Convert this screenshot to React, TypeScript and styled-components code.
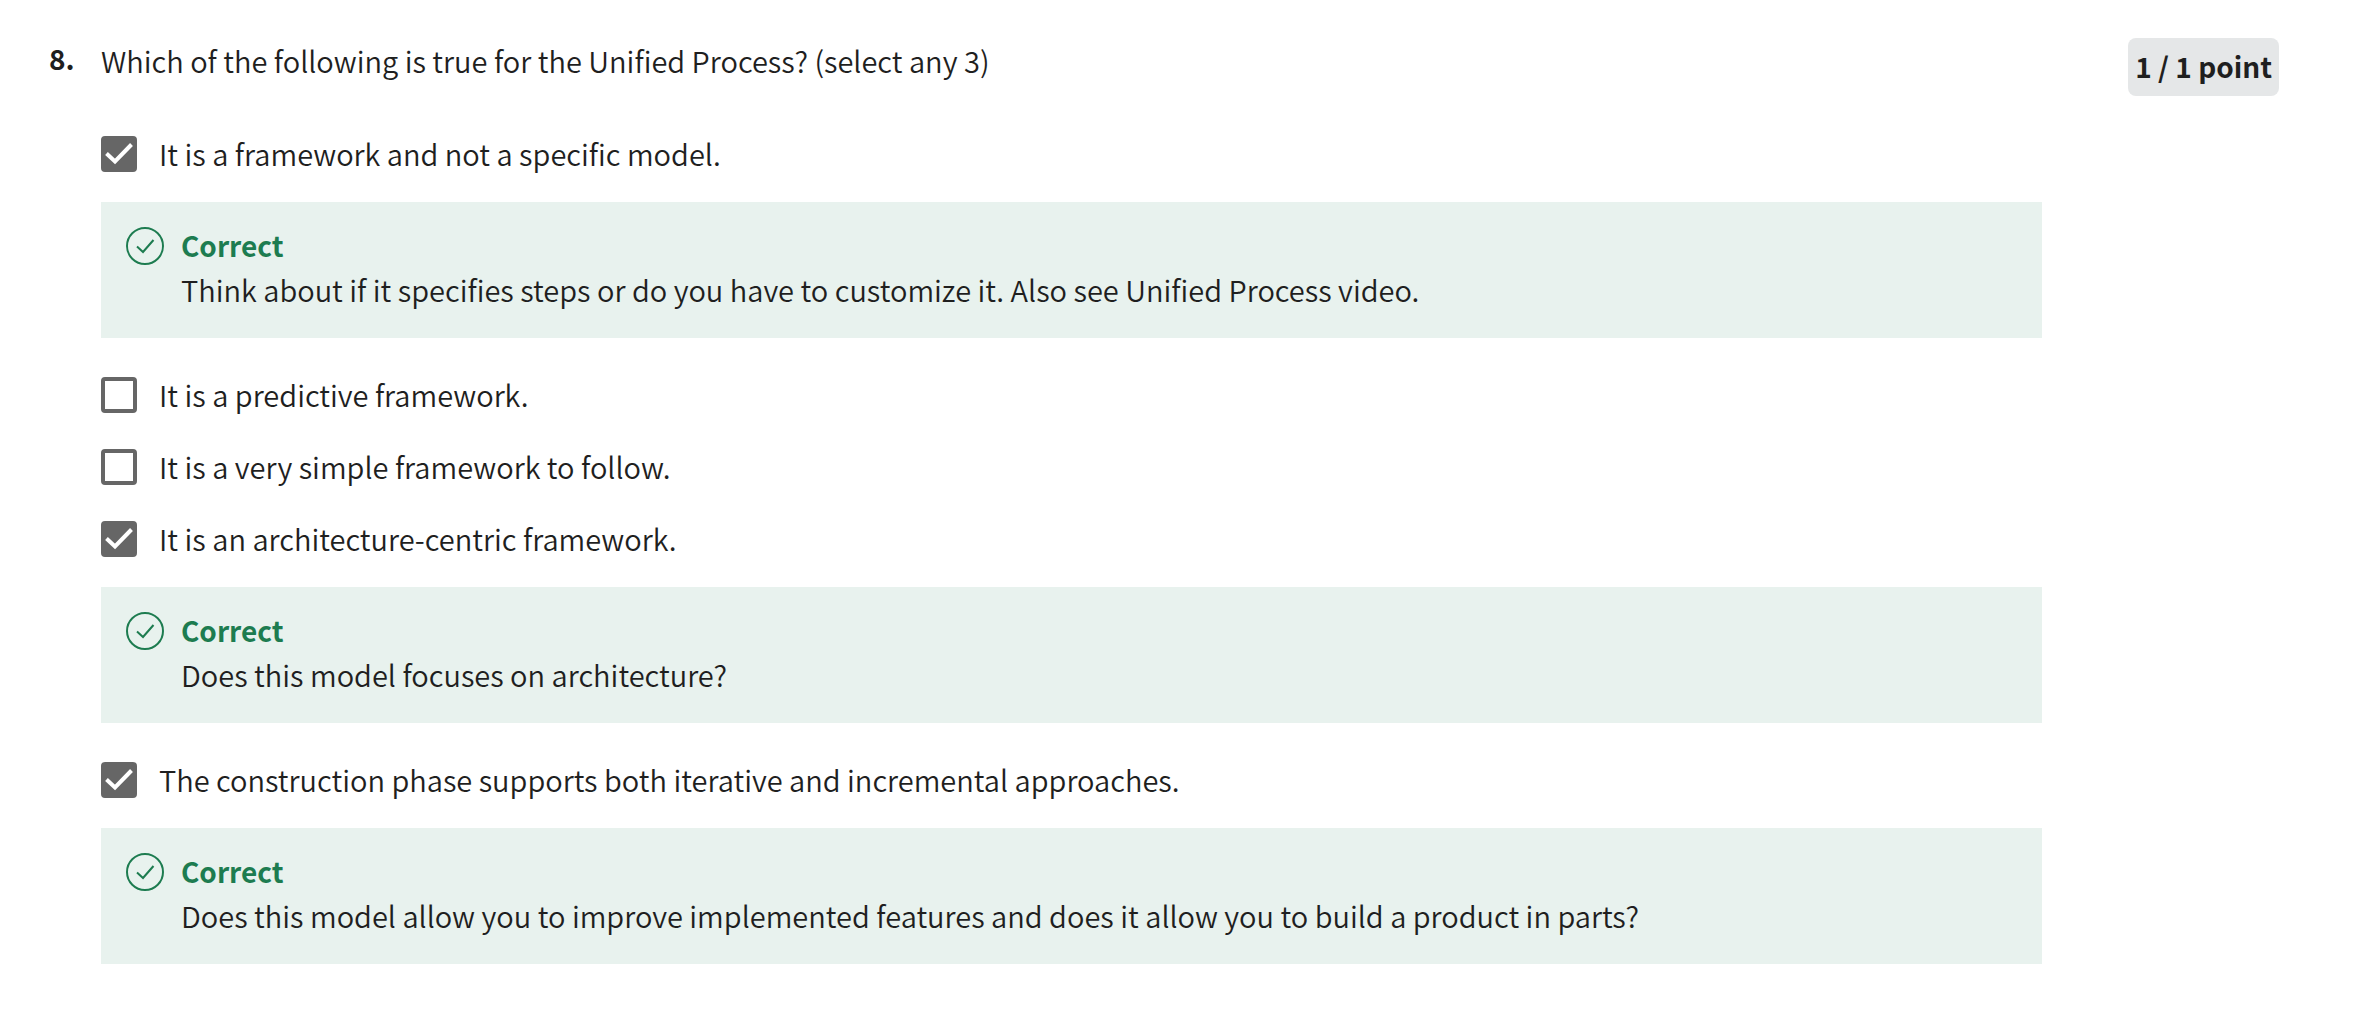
import React from "react";
import styled, { createGlobalStyle } from "styled-components";

const GlobalStyle = createGlobalStyle`
  *, *::before, *::after { box-sizing: border-box; }
  body {
    margin: 0;
    background: #fff;
    color: #1f1f1f;
    font-family: "Source Sans Pro", "Noto Sans CJK SC", "Noto Sans", sans-serif;
    font-size: 29px;
    font-weight: 350;
    line-height: 44px;
  }
`;

const Page = styled.main`
  display: flex;
  align-items: flex-start;
  padding: 38px 100px 46px 49px;
`;

const QuestionNumber = styled.span`
  flex: 0 0 52px;
  font-size: 28px;
  line-height: 40px;
  font-weight: 700;
`;

const Question = styled.fieldset`
  flex: 1;
  min-width: 0;
  margin: 0 86px 0 0;
  padding: 0;
  border: 0;
`;

const Prompt = styled.legend`
  display: block;
  padding: 0 0 36px;
`;

const Points = styled.strong`
  flex: none;
  padding: 6px 7px 8px;
  border-radius: 8px;
  background: #e5e7e8;
  font-size: 28px;
  font-weight: 700;
  white-space: nowrap;
`;

const OptionRow = styled.label`
  display: flex;
  align-items: center;
  gap: 22px;
  min-height: 72px;
  cursor: pointer;
`;

const OptionText = styled.span`
  padding-bottom: 2px;
`;

const CheckSlot = styled.span`
  display: grid;
  flex: none;
  width: 36px;
  height: 36px;

  & > * {
    grid-area: 1 / 1;
  }
`;

const Checkbox = styled.input`
  appearance: none;
  width: 36px;
  height: 36px;
  margin: 0;
  border: 4px solid #666;
  border-radius: 4px;
  background: #fff;

  &:checked {
    background: #666;
  }

  & + svg {
    visibility: hidden;
  }

  &:checked + svg {
    visibility: visible;
  }
`;

const CheckMark = styled.svg`
  width: 36px;
  height: 36px;
  pointer-events: none;
`;

const Feedback = styled.section`
  display: flex;
  gap: 17px;
  margin: 12px 0 21px;
  padding: 21px 25px 27px;
  background: #e8f2ee;

  &:last-child {
    margin-bottom: 0;
  }
`;

const CorrectIcon = styled.svg`
  flex: none;
  width: 38px;
  height: 38px;
  margin-top: 4px;
`;

const FeedbackTitle = styled.h3`
  margin: 0;
  color: #1d7c50;
  font-size: 28px;
  font-weight: 700;
`;

const FeedbackText = styled.p`
  margin: 0;
`;

interface Option {
  label: string;
  checked: boolean;
  feedback?: string;
}

const options: Option[] = [
  {
    label: "It is a framework and not a specific model.",
    checked: true,
    feedback:
      "Think about if it specifies steps or do you have to customize it. Also see Unified Process video.",
  },
  { label: "It is a predictive framework.", checked: false },
  { label: "It is a very simple framework to follow.", checked: false },
  {
    label: "It is an architecture-centric framework.",
    checked: true,
    feedback: "Does this model focuses on architecture?",
  },
  {
    label:
      "The construction phase supports both iterative and incremental approaches.",
    checked: true,
    feedback:
      "Does this model allow you to improve implemented features and does it allow you to build a product in parts?",
  },
];

function CorrectFeedback({ text }: { text: string }) {
  return (
    <Feedback>
      <CorrectIcon viewBox="0 0 38 38" fill="none" stroke="#1d7c50" aria-hidden="true">
        <circle cx="19" cy="19" r="18" strokeWidth="2" />
        <path d="M11 19.5L17 25L27.5 13" strokeWidth="2" />
      </CorrectIcon>
      <div>
        <FeedbackTitle>Correct</FeedbackTitle>
        <FeedbackText>{text}</FeedbackText>
      </div>
    </Feedback>
  );
}

export default function App() {
  return (
    <>
      <GlobalStyle />
      <Page>
        <QuestionNumber>8.</QuestionNumber>
        <Question>
          <Prompt>
            Which of the following is true for the Unified Process? (select any 3)
          </Prompt>
          {options.map((option) => (
            <React.Fragment key={option.label}>
              <OptionRow>
                <CheckSlot>
                  <Checkbox type="checkbox" defaultChecked={option.checked} />
                  <CheckMark viewBox="0 0 36 36" fill="none" aria-hidden="true">
                    <path d="M5.5 17.5L14 25.5L30.5 8.5" stroke="#fff" strokeWidth="4" />
                  </CheckMark>
                </CheckSlot>
                <OptionText>{option.label}</OptionText>
              </OptionRow>
              {option.feedback && <CorrectFeedback text={option.feedback} />}
            </React.Fragment>
          ))}
        </Question>
        <Points>1 / 1 point</Points>
      </Page>
    </>
  );
}
